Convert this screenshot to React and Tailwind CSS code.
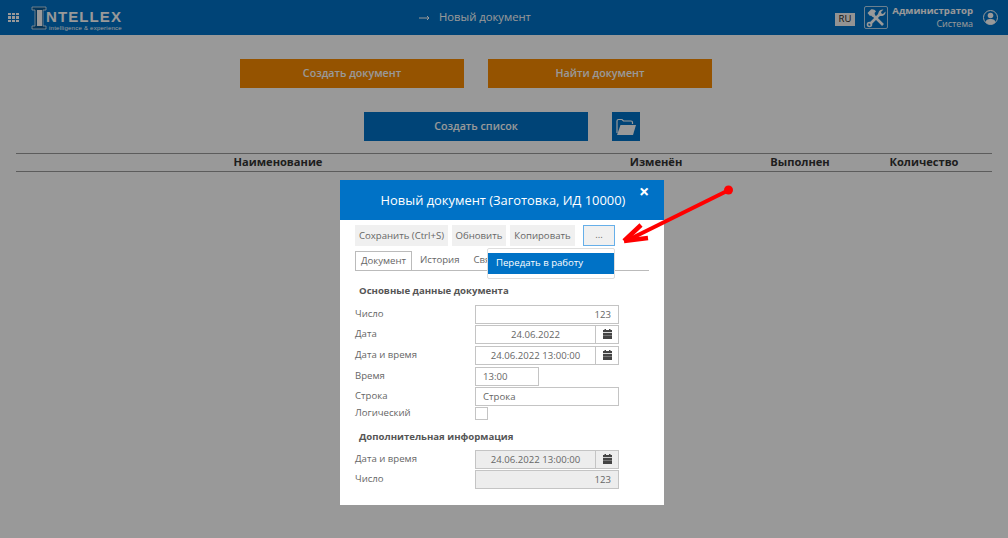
import React from 'react';

const Calendar = () => (
  <svg width="9" height="10" viewBox="0 0 9 10" className="block">
    <path d="M1.500 0h1.500v1H1.500zM6 0h1.500v1H6zM0 1h9v2H0z" fill="#444" />
    <path d="M0 3.800h9V10H0z" fill="#444" />
    <path d="M0 6.400h9v.6H0z" fill="#999" />
  </svg>
);

const ToolsIcon = () => (
  <svg width="20" height="20" viewBox="0 0 20 20">
    {/* ключ */}
    <path d="M4 16L14 6" stroke="#fff" strokeWidth="2.6" fill="none" />
    <path d="M12.500 7.500C11.500 4 14 1 17.500 1.500L15 4l.5 1.500L17 6l2.500-2.500C20 7 16.500 9 12.500 7.500z" fill="#fff" />
    <circle cx="3.500" cy="16.500" r="2" fill="none" stroke="#fff" strokeWidth="1.600" />
    {/* молоток */}
    <path d="M7.500 7.500L17 17" stroke="#fff" strokeWidth="2.600" fill="none" />
    <path d="M1.500 5L5 1.500C7 1 9 2 10 3.500L8.500 5l.5 1.500L6.500 9 5 7.500 4 8z" fill="#fff" />
  </svg>
);

const UserIcon = () => (
  <svg width="15" height="15" viewBox="0 0 15 15" className="ml-[10px] mr-[10px] shrink-0">
    <circle cx="7.500" cy="7.500" r="7" fill="none" stroke="#fff" strokeWidth="1" />
    <circle cx="7.500" cy="5.500" r="2.800" fill="#fff" />
    <path d="M2.500 12.500C3 9.500 5 9 7.500 9s4.500.5 5 3.500A7 7 0 0 1 2.500 12.500z" fill="#fff" />
  </svg>
);

const FolderIcon = () => (
  <svg width="20" height="17" viewBox="0 0 20 17">
    <path d="M1 15V3q0-1.500 1.500-1.500h3.500L7.500 3H15q1.500 0 1.500 1.500V6" fill="none" stroke="#fff" strokeWidth="1.200" />
    <path d="M4.500 7H20l-3 10H1z" fill="#fff" />
  </svg>
);

const Logo = () => (
  <div className="relative ml-[12px] h-[26px] w-[93px] shrink-0">
    <svg width="16" height="24" viewBox="0 0 16 24" className="absolute left-0 top-[1px]">
      <path d="M1 1h14v3h-3v16h3v3H1v-3h3V4H1z" fill="#0a5a95" stroke="#fff" strokeOpacity="0.7" strokeWidth="1" />
      <path d="M6 4h5v16H6z" fill="#fff" />
    </svg>
    <span className="absolute left-[15px] top-[3px] text-[15px] leading-[18px] font-bold tracking-[1.1px] text-white font-['Liberation_Sans',sans-serif]">
      NTELLEX
    </span>
    <span className="absolute left-[18px] top-[20px] text-[6px] leading-[7px] tracking-[0.25px] whitespace-nowrap text-white font-['Liberation_Sans',sans-serif]">
      intelligence &amp; experience
    </span>
  </div>
);

const Header = () => (
  <header className="flex h-[35px] items-center bg-[#0072c6] text-white">
    <div className="ml-[8px] grid h-[9px] w-[11px] shrink-0 grid-cols-3 gap-[1px]">
      {Array.from({ length: 9 }).map((_, i) => (
        <span key={i} className="bg-white" />
      ))}
    </div>
    <Logo />
    <div className="ml-[295px] flex items-center gap-[9px] text-[11.25px] text-white">
      <svg width="11" height="6" viewBox="0 0 11 6">
        <path d="M0 3h10M8 1l2 2-2 2" fill="none" stroke="#fff" strokeWidth="1" />
      </svg>
      <span>Новый документ</span>
    </div>
    <div className="ml-auto flex items-center">
      <span className="mt-[4px] flex h-[13px] w-[20px] items-center justify-center bg-[#f5f5f5] text-[9.5px] text-[#222]">RU</span>
      <span className="ml-[9px] flex h-[23px] w-[24px] items-center justify-center rounded-[2px] border border-white/70">
        <ToolsIcon />
      </span>
      <div className="ml-[4px] mb-[1px] w-[81px] text-right leading-[13px]">
        <div className="text-[9.6px] font-bold">Администратор</div>
        <div className="text-[9px]">Система</div>
      </div>
      <UserIcon />
    </div>
  </header>
);

const BigButton = ({ color, children }) => (
  <div className={`flex h-[29px] w-[224px] items-center justify-center text-[10.7px] font-semibold text-white ${color}`}>
    {children}
  </div>
);

const Table = () => (
  <div className="mx-[16px] mt-[12px] flex h-[19px] items-center border-y border-[#999] text-[11.1px] font-bold text-[#333]">
    <span className="w-[524px] text-center">Наименование</span>
    <span className="ml-[56px] w-[120px] text-center">Изменён</span>
    <span className="ml-[24px] w-[120px] text-center">Выполнен</span>
    <span className="ml-[4px] w-[120px] text-center">Количество</span>
  </div>
);

const ToolButton = ({ w, children }) => (
  <span className={`flex h-[21px] items-center justify-center whitespace-nowrap bg-[#f0f0f0] pt-[1px] ${w}`}>{children}</span>
);

const Input = ({ w = 'w-[144px]', align = 'text-right', disabled, icon, children }) => (
  <div className={`flex h-[19px] items-center border border-[#c4c4c4] ${w} ${disabled ? 'bg-[#ededed]' : 'bg-white'}`}>
    <span className={`flex-1 px-[7px] leading-[17px] ${align}`}>{children}</span>
    {icon && (
      <span className="flex h-full w-[23px] items-center justify-center border-l border-[#c4c4c4]">
        <Calendar />
      </span>
    )}
  </div>
);

const Row = ({ label, h = 'h-[20px]', children }) => (
  <div className={`flex items-center ${h}`}>
    <span className="w-[120px] shrink-0">{label}</span>
    {children}
  </div>
);

const Modal = () => (
  <div className="absolute left-[340px] top-[180px] h-[325px] w-[324px] bg-white text-[9.6px] text-[#666]">
    <div className="relative flex h-[40px] items-center justify-center bg-[#0072c6] pl-[2px] pt-[1px] text-[12.9px] font-medium text-white">
      Новый документ (Заготовка, ИД 10000)
      <span className="absolute left-[299px] top-[3px] text-[18px] leading-[16px] font-bold">×</span>
    </div>

    <div className="px-[15px]">
      <div className="mt-[5px] flex">
        <ToolButton w="w-[93px]">Сохранить (Ctrl+S)</ToolButton>
        <span className="ml-[4px]"><ToolButton w="w-[54px]">Обновить</ToolButton></span>
        <span className="ml-[4px]"><ToolButton w="w-[65px]">Копировать</ToolButton></span>
        <span className="ml-[8px] flex h-[21px] w-[32px] items-center justify-center border border-[#66afe9] bg-[#f0f0f0]">...</span>
      </div>

      <div className="mt-[5px] flex h-[20px] w-[294px] border-b border-[#bbb]">
        <span className="flex h-[20px] w-[57px] items-center justify-center border border-[#bbb] bg-white">Документ</span>
        <span className="ml-[8px] flex items-center">История</span>
        <span className="ml-[14px] flex items-center">Связи</span>
      </div>

      <div className="mt-[13px] pl-[4px] leading-[13px] font-bold text-[#555]">Основные данные документа</div>

      <div className="mt-[7px]">
        <Row label="Число"><Input>123</Input></Row>
        <Row label="Дата"><Input align="text-center" icon>24.06.2022</Input></Row>
        <Row label="Дата и время" h="h-[22px]"><Input align="text-center" icon>24.06.2022 13:00:00</Input></Row>
        <Row label="Время"><Input w="w-[64px]" align="text-left">13:00</Input></Row>
        <Row label="Строка"><Input align="text-left">Строка</Input></Row>
        <Row label="Логический" h="h-[15px]">
          <span className="h-[13px] w-[13px] border border-[#c4c4c4] bg-white" />
        </Row>
      </div>

      <div className="mt-[9px] pl-[4px] leading-[13px] font-bold text-[#555]">Дополнительная информация</div>

      <div className="mt-[6px]">
        <Row label="Дата и время"><Input align="text-center" disabled icon>24.06.2022 13:00:00</Input></Row>
        <Row label="Число" h="h-[21px]"><Input disabled>123</Input></Row>
      </div>
    </div>

    {/* выпадающее меню кнопки "..." */}
    <div className="absolute left-[147px] top-[68px] h-[31px] w-[128px] rounded-[2px] border border-[#ddd] bg-white pt-[4px]">
      <div className="flex h-[21px] items-center bg-[#0072c6] pl-[8px] text-white">Передать в работу</div>
    </div>
  </div>
);

const RedArrow = () => (
  <svg width="1008" height="538" className="pointer-events-none absolute left-0 top-0">
    <circle cx="728.500" cy="190" r="4.500" fill="#f00" />
    <path d="M729 190L628 240" stroke="#f00" strokeWidth="4" fill="none" />
    <path d="M624 241L641 225M624 241L648 238" stroke="#f00" strokeWidth="4.500" fill="none" />
  </svg>
);

export default function App() {
  return (
    <div className="relative h-[538px] w-[1008px] overflow-hidden bg-white font-['Open_Sans',sans-serif]">
      <Header />
      <div className="ml-[240px] mt-[24px] flex gap-[24px]">
        <BigButton color="bg-[#f98a00]">Создать документ</BigButton>
        <BigButton color="bg-[#f98a00]">Найти документ</BigButton>
      </div>
      <div className="ml-[364px] mt-[24px] flex gap-[24px]">
        <BigButton color="bg-[#0072c6]">Создать список</BigButton>
        <span className="flex h-[29px] w-[28px] items-center justify-center bg-[#0072c6]">
          <FolderIcon />
        </span>
      </div>
      <Table />

      {/* затемнение под модальным окном */}
      <div className="absolute inset-0 bg-black/40" />
      <Modal />
      <RedArrow />
    </div>
  );
}
